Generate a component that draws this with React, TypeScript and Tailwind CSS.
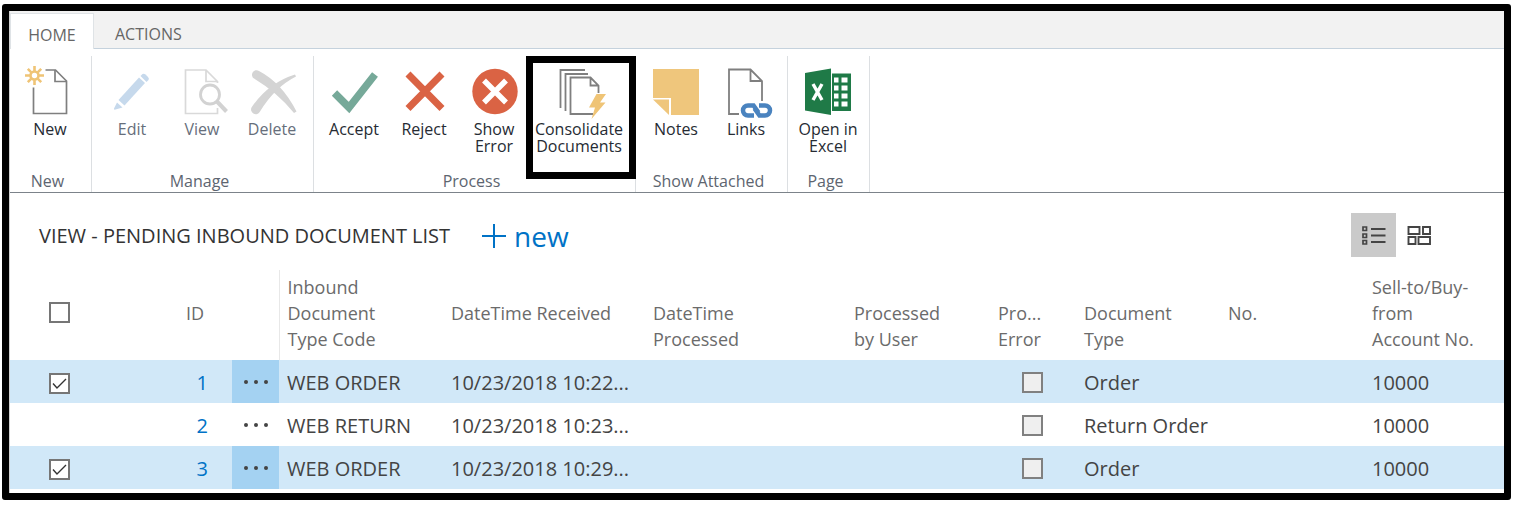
import type { ReactNode } from "react";

/* ---------- Ribbon icons (46 x 50 grid) ---------- */

function Icon({ children }: { children: ReactNode }) {
  return (
    <svg width="46" height="50" viewBox="0 0 46 50" fill="none" aria-hidden="true" className="shrink-0 overflow-visible">
      {children}
    </svg>
  );
}

const NewIcon = () => (
  <Icon>
    <path d="M18.500 4H28.500L39.500 15V47.500H6.500V21.500" stroke="#7f7f7f" strokeWidth="1.700" />
    <path d="M28 4v11.500h11.500" stroke="#7f7f7f" strokeWidth="1.700" />
    <g stroke="#efc476" strokeWidth="2.600">
      <circle cx="7.500" cy="9.500" r="4" />
      <path d="M7.500 0v5M7.500 14v5M-2 9.500h5M12 9.500h5M.8 2.800l3.500 3.500M10.700 12.700l3.500 3.500M.8 16.200l3.500-3.500M10.700 6.300l3.500-3.500" />
    </g>
  </Icon>
);

const EditIcon = () => (
  <Icon>
    <g fill="#c6d9ec">
      <path d="M30 11.500l6 5.500L15.500 39.500l-6-5.500z" />
      <path d="M31.500 10l2-2q1.500-.8 3 .5l2.500 2.500q1.500 1.500.5 3l-2 2z" />
      <path d="M8 36.500l5.500 5L6.500 43.500q-2 .5-1.500-1z" />
    </g>
  </Icon>
);

const ViewIcon = () => (
  <Icon>
    <path d="M38.500 17v-1.500L27 4H6.500v43.500h32V42M27 4v11.500h11.500" stroke="#d9d9d9" strokeWidth="1.700" />
    <circle cx="31" cy="28.500" r="12" fill="#fff" />
    <circle cx="31" cy="28.500" r="9.500" stroke="#d2d2d2" strokeWidth="2.800" />
    <path d="M38 35.500l9.500 10" stroke="#d2d2d2" strokeWidth="4" />
  </Icon>
);

const DeleteIcon = () => (
  <Icon>
    <g fill="#d4d4d4">
      <path d="M5 12.500A4.300 4.300 0 0 1 10 5Q33 17 47.500 45.500L45 47Q29 27 5 12.500z" />
      <path d="M2.500 41.500Q19 17 46 8.500L47 10.500Q26 21 11 45.500A4.600 4.600 0 0 1 2.500 41.500z" />
    </g>
  </Icon>
);

const AcceptIcon = () => (
  <Icon>
    <path d="M3.500 27l14.500 14.500L44 8.500" stroke="#76a999" strokeWidth="7.500" />
  </Icon>
);

const RejectIcon = () => (
  <Icon>
    <path d="M7 8l34 34.500M41 8L7 42.500" stroke="#da6344" strokeWidth="7" />
  </Icon>
);

const ErrorIcon = () => (
  <Icon>
    <circle cx="24" cy="25.500" r="22.700" fill="#da6344" />
    <path d="M13 14.500l22 22M35 14.500l-22 22" stroke="#fff" strokeWidth="5.500" />
  </Icon>
);

const ConsolidateIcon = () => (
  <Icon>
    <g stroke="#7f7f7f" strokeWidth="1.800">
      <path d="M29 4H4.500v38M32 8H9.500v37" />
      <path d="M37 48H14.500V11.500h20l8 8V27M34.500 11.500v8h8" />
    </g>
    <path d="M40.500 28H50l-6 8.500h5.500L35.500 53l3.500-11.500h-6z" fill="#efc476" />
  </Icon>
);

const NotesIcon = () => (
  <Icon>
    <path d="M0 3h46v46H18V32H0z" fill="#efc67c" />
    <path d="M0 33.500h16V49z" fill="#efc67c" />
  </Icon>
);

const LinksIcon = () => (
  <Icon>
    <path d="M16 48H6V3.500h21.500L39 15v20M27.500 3.500V15H39" stroke="#7f7f7f" strokeWidth="1.800" />
    <rect x="15.500" y="35.500" width="35" height="18" rx="9" fill="#fff" />
    <g stroke="#4a83bf" strokeWidth="4.500">
      <path d="M31 49.500h-6a5 5 0 0 1 0-10h5.500l5 7" />
      <path d="M36 39.500h6a5 5 0 0 1 0 10h-5.500l-5-7" />
    </g>
  </Icon>
);

const ExcelIcon = () => (
  <Icon>
    <path d="M26 7.500h20v37.500H26z" fill="#1f7a47" />
    <path
      d="M29 11.500h4.500v5H29zM36.500 11.500h6v5h-6zM29 19.500h4.500v5H29zM36.500 19.500h6v5h-6zM29 27.500h4.500v5H29zM36.500 27.500h6v5h-6zM29 35.500h4.500v5H29zM36.500 35.500h6v5h-6z"
      fill="#fff"
    />
    <path d="M0 7L26 2.500V49L0 44.500z" fill="#1f7a47" />
    <path d="M26.500 2v47" stroke="#fff" />
    <path d="M8 18l9 16M17 18L8 34" stroke="#fff" strokeWidth="3.400" />
  </Icon>
);

/* ---------- Ribbon ---------- */

type Action = { label: string; icon: ReactNode; disabled?: boolean; highlighted?: boolean };

const groups: { name: string; actions: Action[] }[] = [
  { name: "New", actions: [{ label: "New", icon: <NewIcon /> }] },
  {
    name: "Manage",
    actions: [
      { label: "Edit", icon: <EditIcon />, disabled: true },
      { label: "View", icon: <ViewIcon />, disabled: true },
      { label: "Delete", icon: <DeleteIcon />, disabled: true },
    ],
  },
  {
    name: "Process",
    actions: [
      { label: "Accept", icon: <AcceptIcon /> },
      { label: "Reject", icon: <RejectIcon /> },
      { label: "Show Error", icon: <ErrorIcon /> },
      { label: "Consolidate Documents", icon: <ConsolidateIcon />, highlighted: true },
    ],
  },
  {
    name: "Show Attached",
    actions: [
      { label: "Notes", icon: <NotesIcon /> },
      { label: "Links", icon: <LinksIcon /> },
    ],
  },
  { name: "Page", actions: [{ label: "Open in Excel", icon: <ExcelIcon /> }] },
];

function RibbonButton({ label, icon, disabled, highlighted }: Action) {
  return (
    <div className={highlighted ? "relative w-[100px]" : "w-[70px]"}>
      <button
        type="button"
        disabled={disabled}
        className={`flex w-full flex-col items-center pt-[10px] text-center text-base leading-[17px] ${
          disabled ? "text-[#666e7b]" : "text-[#262b33]"
        }`}
      >
        {icon}
        <span className="mt-[5px]">{label}</span>
      </button>
      {highlighted && (
        <span className="pointer-events-none absolute -right-[7px] -left-[3px] top-0 z-10 h-[123px] border-[7px] border-black" />
      )}
    </div>
  );
}

function Ribbon() {
  return (
    <div className="flex border-b border-[#7c838a] pt-[7px]">
      {groups.map((g) => (
        <section key={g.name} className="flex h-[136px] flex-col justify-between border-r border-[#dcdfe2] pr-[6px] pl-[5px]">
          <div className="flex">
            {g.actions.map((a) => (
              <RibbonButton key={a.label} {...a} />
            ))}
          </div>
          <h2 className="pr-[5px] text-center text-base leading-[22px] text-[#5d6570]">{g.name}</h2>
        </section>
      ))}
    </div>
  );
}

/* ---------- List ---------- */

const columns = [
  { title: "Inbound Document Type Code", width: "w-[164px] pr-10" },
  { title: "DateTime Received", width: "w-[202px]" },
  { title: "DateTime Processed", width: "w-[201px] pr-10" },
  { title: "Processed by User", width: "w-[144px] pr-10" },
  { title: "Processed Error", width: "w-[86px]" },
  { title: "Document Type", width: "w-[144px] pr-10" },
  { title: "No.", width: "w-[144px]" },
  { title: "Sell-to/Buy-from Account No.", width: "pr-6" },
];

const rows = [
  { id: 1, code: "WEB ORDER", received: "10/23/2018 10:22...", type: "Order", account: "10000", selected: true },
  { id: 2, code: "WEB RETURN", received: "10/23/2018 10:23...", type: "Return Order", account: "10000", selected: false },
  { id: 3, code: "WEB ORDER", received: "10/23/2018 10:29...", type: "Order", account: "10000", selected: true },
];

function Checkbox({ label, checked }: { label: string; checked?: boolean }) {
  return (
    <label className="relative block size-[21px]">
      <input
        type="checkbox"
        aria-label={label}
        defaultChecked={checked}
        className="peer block size-[21px] appearance-none border-2 border-[#767676] bg-white"
      />
      <svg viewBox="0 0 21 21" fill="none" className="pointer-events-none absolute inset-0 hidden peer-checked:block">
        <path d="M4 10.500l4 4.500 9-9" stroke="#333" strokeWidth="1.400" />
      </svg>
    </label>
  );
}

function HeaderText({ title }: { title: string }) {
  if (title === "Processed Error") {
    return (
      <div className="min-h-[52px]">
        Pro...
        <br />
        Error
      </div>
    );
  }
  return <div className="min-h-[52px]">{title}</div>;
}

function DocumentTable() {
  return (
    <table className="w-full table-fixed border-collapse text-xl">
      <thead className="text-lg leading-[26px] text-[#6b6b6b]">
        <tr className="h-[90px] text-left align-bottom">
          <th className="w-[80px] pb-[37px] pl-[39px]">
            <Checkbox label="Select all" />
          </th>
          <th className="w-[142px] pr-7 pb-2 text-right font-normal">
            <HeaderText title="ID" />
          </th>
          <th className="w-[47px] border-r border-[#e8e8e8]" aria-label="Row menu" />
          {columns.map((c) => (
            <th key={c.title} className={`${c.width} pb-2 pl-2 font-normal`}>
              <HeaderText title={c.title} />
            </th>
          ))}
        </tr>
      </thead>
      <tbody className="whitespace-nowrap text-[#444]">
        {rows.map((r) => (
          <tr key={r.id} className={`h-[43px] ${r.selected ? "bg-[#d1e8f8]" : "bg-white"}`}>
            <td className="pt-[3px] pl-[39px]">{r.selected && <Checkbox label={`Select document ${r.id}`} checked />}</td>
            <td className="pt-[2px] pr-6 text-right">
              <a href={`#document-${r.id}`} className="text-[#0072c6]">
                {r.id}
              </a>
            </td>
            <td className={r.selected ? "bg-[#a4d2f2]" : ""}>
              <button type="button" aria-label={`Menu for document ${r.id}`} className="flex w-full justify-center gap-[6px]">
                <span className="size-1 rounded-full bg-[#444]" />
                <span className="size-1 rounded-full bg-[#444]" />
                <span className="size-1 rounded-full bg-[#444]" />
              </button>
            </td>
            <td className="pt-[2px] pl-2">{r.code}</td>
            <td className="pt-[2px] pl-2">{r.received}</td>
            <td />
            <td />
            <td className="pt-[2px]">
              <input
                type="checkbox"
                disabled
                aria-label={`Processed error on document ${r.id}`}
                className="ml-8 block h-[21px] w-[21px] appearance-none border-2 border-[#808080] bg-[#efefef]"
              />
            </td>
            <td className="pt-[2px] pl-2">{r.type}</td>
            <td />
            <td className="pt-[2px] pl-2">{r.account}</td>
          </tr>
        ))}
      </tbody>
    </table>
  );
}

export default function App() {
  return (
    <div className="bg-white pt-1 pr-1 pl-[2px] font-['Open_Sans',sans-serif]">
      <main className="overflow-hidden rounded-[3px] border-[7px] border-black bg-black">
        <div className="border-l border-[#d0d0d0] bg-white pb-1">
          <nav className="flex h-[38px] items-end border-b border-[#c5d2dd] bg-[#f2f2f2] text-base text-[#666]">
            <a href="#home" className="-mb-px flex h-9 w-[84px] items-center justify-center border-x border-t border-[#dfe3e6] bg-white pt-1.5">
              HOME
            </a>
            <a href="#actions" className="-mb-px flex h-9 items-center px-[21px] pt-1.5">
              ACTIONS
            </a>
          </nav>
          <Ribbon />
          <header className="flex items-center justify-between pt-5 pr-[63px] pb-[13px] pl-[29px]">
            <div className="flex items-center gap-8 pt-[2px]">
              <h1 className="text-xl text-[#333]">VIEW - PENDING INBOUND DOCUMENT LIST</h1>
              <button type="button" className="flex items-center gap-2 text-[28px] leading-8 text-[#0072c6]">
                <svg width="24" height="24" viewBox="0 0 24 24" stroke="currentColor" strokeWidth="2" aria-hidden="true">
                  <path d="M12 0v24M0 12h24" />
                </svg>
                new
              </button>
            </div>
            <div className="flex">
              <button type="button" aria-label="List view" className="flex h-11 w-[45px] items-center justify-center bg-[#cacaca]">
                <svg width="24" height="20" viewBox="0 0 24 20" fill="none" stroke="#444" aria-hidden="true">
                  <path d="M1 2h3.500v3.500H1zM1 9h3.500v3.500H1zM1 15.500h3.500V19H1z" strokeWidth="1.700" />
                  <path d="M9 4h14.500M9 10.500h14.500M9 17h14.500" strokeWidth="1.800" />
                </svg>
              </button>
              <button type="button" aria-label="Tile view" className="flex h-11 w-[45px] items-center justify-center">
                <svg width="24" height="20" viewBox="0 0 24 20" fill="none" stroke="#444" strokeWidth="1.900" aria-hidden="true">
                  <path d="M1.500 2h11v7h-11zM16 2h7v7h-7zM1.500 12h7v7h-7zM11.500 12H23v7H11.500z" />
                </svg>
              </button>
            </div>
          </header>
          <DocumentTable />
        </div>
      </main>
    </div>
  );
}
